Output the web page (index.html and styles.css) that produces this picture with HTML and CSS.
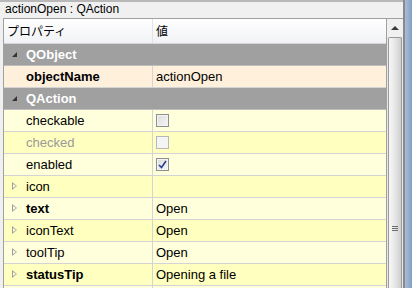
FILE: index.html
```html
<!DOCTYPE html>
<html lang="ja">
<head>
    <meta charset="UTF-8">
    <title>プロパティエディタ</title>
    <link rel="stylesheet" href="styles.css">
</head>
<body>
    <div class="window">
        <div class="panel">
            <div class="object-label">actionOpen : QAction</div>
            <div class="editor">
                <div class="tree">
                    <div class="head">
                        <div class="cell-name">プロパティ</div>
                        <div class="cell-value">値</div>
                    </div>
                    <div class="row group">
                        <div class="cell-name"><span class="arrow-open"></span>QObject</div>
                    </div>
                    <div class="row changed">
                        <div class="cell-name bold">objectName</div>
                        <div class="cell-value">actionOpen</div>
                    </div>
                    <div class="row group">
                        <div class="cell-name"><span class="arrow-open"></span>QAction</div>
                    </div>
                    <div class="row light">
                        <div class="cell-name">checkable</div>
                        <div class="cell-value"><span class="check"></span></div>
                    </div>
                    <div class="row dark">
                        <div class="cell-name disabled">checked</div>
                        <div class="cell-value"><span class="check off"></span></div>
                    </div>
                    <div class="row light">
                        <div class="cell-name">enabled</div>
                        <div class="cell-value"><span class="check on">
                            <svg width="9" height="9" viewBox="0 0 9 9"><path d="M1 5 L3.5 7.5 L8 1" fill="none" stroke="#2a3f8f" stroke-width="1.6"/></svg>
                        </span></div>
                    </div>
                    <div class="row dark">
                        <div class="cell-name"><span class="arrow"></span>icon</div>
                        <div class="cell-value"></div>
                    </div>
                    <div class="row light">
                        <div class="cell-name bold"><span class="arrow"></span>text</div>
                        <div class="cell-value">Open</div>
                    </div>
                    <div class="row dark">
                        <div class="cell-name"><span class="arrow"></span>iconText</div>
                        <div class="cell-value">Open</div>
                    </div>
                    <div class="row light">
                        <div class="cell-name"><span class="arrow"></span>toolTip</div>
                        <div class="cell-value">Open</div>
                    </div>
                    <div class="row dark">
                        <div class="cell-name bold"><span class="arrow"></span>statusTip</div>
                        <div class="cell-value">Opening a file</div>
                    </div>
                    <div class="row light">
                        <div class="cell-name"></div>
                        <div class="cell-value"></div>
                    </div>
                </div>
                <div class="scrollbar">
                    <div class="scroll-up"></div>
                    <div class="thumb">
                        <div class="grip"></div>
                    </div>
                </div>
            </div>
        </div>
        <div class="frame"></div>
    </div>
</body>
</html>
```

FILE: styles.css
```css
html, body {
    margin: 0;
    padding: 0;
}
body {
    width: 412px;
    height: 288px;
    overflow: hidden;
    font-family: "Liberation Sans", "Noto Sans CJK JP", sans-serif;
    font-size: 12px;
    color: #000;
    background: #f0f0f0;
}
.window {
    display: flex;
    height: 288px;
}
.panel {
    width: 403px;
    background: #f0f0f0;
    border-right: 2px solid #8a8a8a;
    display: flex;
    flex-direction: column;
}
.frame {
    flex: 1;
    background: linear-gradient(to right, #a8bcd6, #86a0c4);
}
.object-label {
    height: 15px;
    line-height: 15px;
    margin-top: 2px;
    border-top: 0;
    padding-left: 5px;
    background: #f0f0f0;
    box-shadow: 0 -2px 0 #b8b8b8;
}
.editor {
    flex: 1;
    display: flex;
    margin-left: 3px;
    border-top: 1px solid #a0a0a0;
    border-left: 1px solid #a0a0a0;
    margin-top: 1px;
    overflow: hidden;
}
.tree {
    width: 385px;
    border-right: 1px solid #a0a0a0;
    background: #fff;
}
.head {
    display: flex;
    height: 24px;
    line-height: 24px;
    background: linear-gradient(#ffffff, #f1f2f5);
    border-bottom: 1px solid #d5d5d5;
    font-family: "Noto Sans CJK JP", sans-serif;
    font-size: 12px;
}
.head .cell-name {
    padding-left: 3px;
    width: 145px;
    border-right: 1px solid #e3e4e6;
}
.head .cell-value {
    padding-left: 3px;
}
.row {
    display: flex;
    height: 21px;
    line-height: 21px;
    border-bottom: 1px solid #d4d4d4;
    font-size: 13px;
}
.row .cell-name {
    width: 126px;
    padding-left: 22px;
    border-right: 1px solid #d4d4d4;
    position: relative;
    white-space: nowrap;
}
.row .cell-value {
    flex: 1;
    padding-left: 3px;
    white-space: nowrap;
}
.group {
    background: #a0a0a0;
    color: #fff;
    font-weight: bold;
    border-bottom-color: #bdbdbd;
}
.group .cell-name {
    border-right: 0;
}
.changed {
    background: #fff0dc;
}
.light {
    background: #ffffdc;
}
.dark {
    background: #ffffbf;
}
.bold {
    font-weight: bold;
}
.disabled {
    color: #9a9a9a;
}
.arrow-open {
    position: absolute;
    left: 8px;
    top: 8px;
    width: 0;
    height: 0;
    border-left: 5px solid transparent;
    border-bottom: 5px solid #333;
}
.arrow {
    position: absolute;
    left: 8px;
    top: 6px;
    width: 0;
    height: 0;
    border-top: 4px solid transparent;
    border-bottom: 4px solid transparent;
    border-left: 5px solid #a0a0a0;
}
.arrow::after {
    content: "";
    position: absolute;
    left: -4px;
    top: -2px;
    border-top: 2px solid transparent;
    border-bottom: 2px solid transparent;
    border-left: 3px solid #fff;
}
.light .arrow::after {
    border-left-color: #ffffdc;
}
.dark .arrow::after {
    border-left-color: #ffffbf;
}
.check {
    display: inline-block;
    vertical-align: middle;
    margin-top: -3px;
    width: 11px;
    height: 11px;
    border: 1px solid #8e8f8f;
    background: linear-gradient(135deg, #dcdcdc, #f6f6f6);
    box-shadow: inset 0 0 0 1px #f4f4f4;
    text-align: center;
    line-height: 9px;
}
.check.off {
    border-color: #b8b8b8;
    background: #f4f4f4;
}
.check svg {
    margin-top: 1px;
}
.scrollbar {
    width: 16px;
    display: flex;
    flex-direction: column;
    background: #e8e8e8;
}
.scroll-up {
    height: 18px;
    position: relative;
    background: #f0f0f0;
}
.scroll-up::after {
    content: "";
    position: absolute;
    left: 4px;
    top: 7px;
    border-left: 4px solid transparent;
    border-right: 4px solid transparent;
    border-bottom: 4px solid #3a3a3a;
}
.thumb {
    flex: 1;
    margin: 0 1px 0 1px;
    border: 1px solid #9a9a9a;
    border-bottom: 0;
    border-radius: 2px 2px 0 0;
    background: linear-gradient(to right, #f7f7f7, #e6e6e6 50%, #cfcfcf);
    position: relative;
}
.grip {
    position: absolute;
    left: 3px;
    top: 188px;
    width: 6px;
    height: 5px;
    background: repeating-linear-gradient(#6e6e6e 0 1px, transparent 1px 2px);
}
```
